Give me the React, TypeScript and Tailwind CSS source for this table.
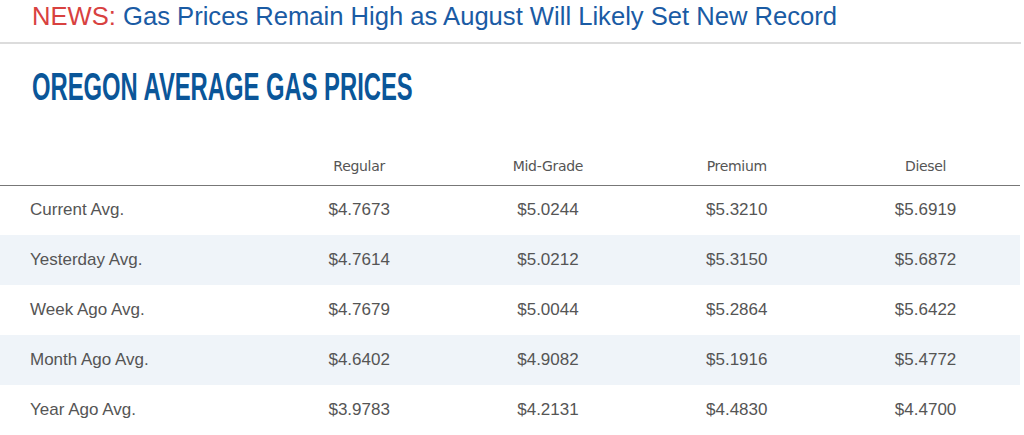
import React from "react";

const rows = [
  { label: "Current Avg.", values: ["$4.7673", "$5.0244", "$5.3210", "$5.6919"] },
  { label: "Yesterday Avg.", values: ["$4.7614", "$5.0212", "$5.3150", "$5.6872"] },
  { label: "Week Ago Avg.", values: ["$4.7679", "$5.0044", "$5.2864", "$5.6422"] },
  { label: "Month Ago Avg.", values: ["$4.6402", "$4.9082", "$5.1916", "$5.4772"] },
  { label: "Year Ago Avg.", values: ["$3.9783", "$4.2131", "$4.4830", "$4.4700"] },
];

const grades = ["Regular", "Mid-Grade", "Premium", "Diesel"];

export default function App() {
  return (
    <div className="w-[1024px] h-[435px] overflow-hidden bg-white">
      <div className="w-[1021px] border-b-2 border-[#dcdcdc] pl-[32px] h-[44px]">
        <p className="font-['Liberation_Sans',Arial,sans-serif] text-[25.6px] leading-[30px] pt-[1px] whitespace-nowrap">
          <span className="text-[#d8413f]">NEWS:</span>{" "}
          <span className="text-[#1a5ba4]">Gas Prices Remain High as August Will Likely Set New Record</span>
        </p>
      </div>

      <h1 className="pl-[32px] pt-[21px] h-[114px] font-['Liberation_Sans',Arial,sans-serif] font-bold text-[39px] leading-[44px] text-[#0a5699] whitespace-nowrap">
        <span className="inline-block origin-left scale-x-[0.61]">OREGON AVERAGE GAS PRICES</span>
      </h1>

      <table className="w-[1020px] border-collapse font-['Liberation_Sans',Arial,sans-serif] text-[#555555]">
        <thead>
          <tr className="h-[27px] border-b border-[#777777]">
            <th className="w-[265px]" />
            {grades.map((g) => (
              <th
                key={g}
                className="w-[189px] pb-[10px] text-center align-top font-normal text-[14px] leading-[16px] tracking-[-0.3px] font-['DejaVu_Sans',sans-serif] text-[#555555]"
              >
                {g}
              </th>
            ))}
          </tr>
        </thead>
        <tbody>
          {rows.map((r, i) => (
            <tr key={r.label} className={i % 2 === 1 ? "h-[50px] bg-[#eff4f9]" : "h-[50px]"}>
              <td className="pl-[30px] text-[17px] leading-[20px]">{r.label}</td>
              {r.values.map((v, j) => (
                <td key={j} className="text-center text-[17px] leading-[20px]">
                  {v}
                </td>
              ))}
            </tr>
          ))}
        </tbody>
      </table>
    </div>
  );
}
